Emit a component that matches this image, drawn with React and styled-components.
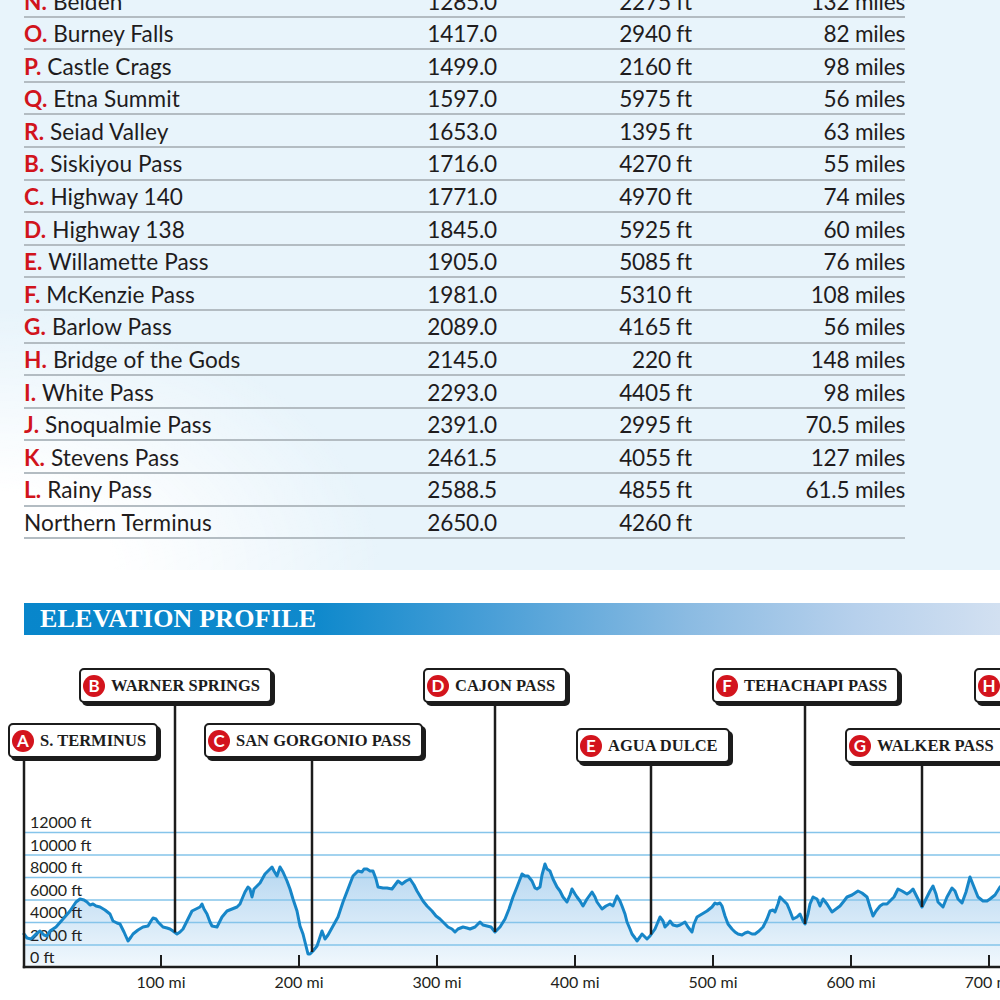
import React from "react";
import styled, { createGlobalStyle } from "styled-components";

const GlobalStyle = createGlobalStyle`
  html, body { margin: 0; padding: 0; background: #ffffff; overflow: hidden; }
  body { font-family: Lato, "Open Sans", sans-serif; color: #231f20; }
`;

const rows = [
  ["N", "Belden", "1285.0", "2275 ft", "132 miles"],
  ["O", "Burney Falls", "1417.0", "2940 ft", "82 miles"],
  ["P", "Castle Crags", "1499.0", "2160 ft", "98 miles"],
  ["Q", "Etna Summit", "1597.0", "5975 ft", "56 miles"],
  ["R", "Seiad Valley", "1653.0", "1395 ft", "63 miles"],
  ["B", "Siskiyou Pass", "1716.0", "4270 ft", "55 miles"],
  ["C", "Highway 140", "1771.0", "4970 ft", "74 miles"],
  ["D", "Highway 138", "1845.0", "5925 ft", "60 miles"],
  ["E", "Willamette Pass", "1905.0", "5085 ft", "76 miles"],
  ["F", "McKenzie Pass", "1981.0", "5310 ft", "108 miles"],
  ["G", "Barlow Pass", "2089.0", "4165 ft", "56 miles"],
  ["H", "Bridge of the Gods", "2145.0", "220 ft", "148 miles"],
  ["I", "White Pass", "2293.0", "4405 ft", "98 miles"],
  ["J", "Snoqualmie Pass", "2391.0", "2995 ft", "70.5 miles"],
  ["K", "Stevens Pass", "2461.5", "4055 ft", "127 miles"],
  ["L", "Rainy Pass", "2588.5", "4855 ft", "61.5 miles"],
  [null, "Northern Terminus", "2650.0", "4260 ft", ""],
];

const profile = [
  [24,935],[27,939],[31,940],[36,935],[40,932],[44,936],[47,937],[50,932],[56,928],[63,920],[70,912],[76,903],[80,900],[84,901],[87,903],[90,906],[93,905],[96,907],[100,908],[105,911],[110,915],[113,922],[117,924],[120,925],[124,933],[128,942],[131,938],[133,935],[138,931],[143,928],[148,927],[151,922],[153,919],[156,920],[158,923],[163,928],[167,929],[170,930],[173,932],[177,935],[180,933],[183,930],[188,920],[192,912],[196,910],[200,908],[202,905],[204,910],[207,915],[210,923],[212,927],[217,928],[220,922],[222,918],[227,912],[232,910],[237,908],[240,905],[242,900],[245,893],[248,888],[250,890],[252,898],[254,890],[257,887],[260,884],[265,875],[268,872],[272,868],[274,872],[277,877],[280,868],[283,873],[287,882],[290,890],[293,900],[297,912],[300,927],[303,935],[305,943],[308,955],[310,955],[313,952],[317,947],[320,938],[322,932],[325,940],[328,936],[333,927],[338,918],[343,903],[348,890],[353,877],[356,874],[358,872],[362,873],[364,870],[367,870],[370,872],[373,872],[376,880],[378,888],[383,889],[387,889],[392,890],[395,886],[398,882],[402,885],[406,882],[410,880],[414,886],[417,892],[420,897],[423,902],[427,907],[432,912],[436,917],[440,920],[444,924],[448,928],[452,930],[455,933],[458,930],[463,928],[467,929],[470,930],[475,928],[480,923],[483,926],[487,927],[491,928],[495,933],[500,928],[505,920],[509,910],[513,898],[517,888],[522,875],[525,877],[528,877],[532,882],[535,889],[537,890],[540,888],[542,876],[545,865],[547,870],[550,872],[553,880],[557,888],[560,892],[563,898],[567,903],[570,896],[572,890],[575,895],[577,898],[580,902],[583,907],[587,900],[592,893],[595,898],[597,903],[602,910],[606,907],[610,905],[613,907],[617,897],[620,902],[622,907],[625,915],[627,923],[630,930],[632,935],[635,939],[637,942],[640,938],[642,935],[645,938],[647,940],[650,937],[655,930],[660,918],[663,922],[665,928],[668,925],[670,922],[673,926],[677,927],[680,926],[685,923],[688,928],[692,933],[694,925],[697,918],[702,915],[707,912],[712,908],[715,904],[717,905],[720,904],[722,907],[725,917],[728,925],[732,930],[735,933],[738,935],[742,936],[745,934],[748,933],[752,935],[755,935],[759,932],[763,928],[767,920],[770,912],[773,911],[775,913],[778,905],[780,898],[784,902],[787,905],[790,912],[793,920],[797,918],[800,915],[803,922],[805,925],[808,915],[810,905],[813,898],[817,900],[820,907],[823,900],[827,905],[832,913],[836,910],[840,907],[844,902],[847,898],[852,896],[855,894],[858,892],[862,894],[867,898],[870,908],[873,917],[876,912],[880,907],[883,905],[887,905],[890,902],[894,898],[898,890],[902,892],[907,895],[910,893],[913,890],[917,898],[922,908],[925,902],[930,892],[933,887],[936,895],[938,903],[943,908],[947,898],[952,889],[955,892],[958,900],[962,904],[966,893],[970,878],[974,888],[978,898],[983,902],[987,902],[990,900],[995,896],[1000,888],[1006,882],
];

const TOP = 636;
const AXIS_Y = 968;
const gridLevels = [
  { label: "12000 ft", y: 833.5 },
  { label: "10000 ft", y: 856 },
  { label: "8000 ft", y: 878.5 },
  { label: "6000 ft", y: 901 },
  { label: "4000 ft", y: 923.5 },
  { label: "2000 ft", y: 946 },
  { label: "0 ft", y: 968 },
];

const callouts = [
  { letter: "A", name: "S. TERMINUS", x: 8, y: 724, lineX: 24 },
  { letter: "B", name: "WARNER SPRINGS", x: 79, y: 669, lineX: 175 },
  { letter: "C", name: "SAN GORGONIO PASS", x: 204, y: 724, lineX: 312 },
  { letter: "D", name: "CAJON PASS", x: 423, y: 669, lineX: 495 },
  { letter: "E", name: "AGUA DULCE", x: 576, y: 729, lineX: 651 },
  { letter: "F", name: "TEHACHAPI PASS", x: 712, y: 669, lineX: 805 },
  { letter: "G", name: "WALKER PASS", x: 845, y: 729, lineX: 922 },
  { letter: "H", name: "KENNEDY MEADOWS", x: 974, y: 669, lineX: null },
];

const curveYAt = (x) => {
  for (let i = 0; i < profile.length - 1; i++) {
    const [x1, y1] = profile[i];
    const [x2, y2] = profile[i + 1];
    if (x >= x1 && x <= x2) return y1 + ((x - x1) / (x2 - x1)) * (y2 - y1);
  }
  return AXIS_Y;
};

const Page = styled.div`
  width: 1000px;
  height: 1000px;
  overflow: hidden;
  display: flex;
  flex-direction: column;
`;

const Panel = styled.section`
  background:
    radial-gradient(ellipse 380px 260px at 0% 100%, #ffffff 0%, #ffffff 30%, rgba(255,255,255,0) 100%),
    #e8f4fb;
  padding: 0 95px 31px 24px;
  display: flex;
  flex-direction: column;
`;

const Table = styled.div`
  margin-top: -15px;
  display: flex;
  flex-direction: column;
`;

const Row = styled.div`
  display: grid;
  grid-template-columns: 333px 140px 195px 213px;
  align-items: center;
  height: 32.6px;
  box-sizing: border-box;
  padding-top: 3px;
  border-bottom: 2px solid #b3bcc2;
  font-size: 22.6px;
  line-height: 1;
  color: #1f1c1d;
`;

const Cell = styled.div`
  text-align: ${(p) => p.$align || "left"};
  white-space: nowrap;
  letter-spacing: ${(p) => (p.$align ? "-0.2px" : "0.1px")};
`;

const Mark = styled.span`
  color: #d1141c;
  font-weight: 700;
`;

const Heading = styled.h2`
  margin: 33px 0 0 24px;
  height: 32px;
  display: flex;
  align-items: center;
  padding-left: 16px;
  background: linear-gradient(90deg, #0886cb 0%, #0f89cc 30%, #4a9fd7 48%, #8bbbe2 68%, #b6d0ec 85%, #d2e0f1 100%);
  color: #ffffff;
  font-family: "Liberation Serif", serif;
  font-weight: 700;
  font-size: 26px;
  letter-spacing: 0.2px;
`;

const ChartArea = styled.div`
  position: relative;
  height: 364px;
  overflow: hidden;
`;

const ChartSvg = styled.svg`
  display: block;
`;

const Callout = styled.div`
  position: absolute;
  left: ${(p) => p.$x}px;
  top: ${(p) => p.$y}px;
  height: 35px;
  box-sizing: border-box;
  display: flex;
  align-items: center;
  gap: 6px;
  padding: 0 10px 0 2px;
  background: #ffffff;
  border: 2px solid #1c1c1c;
  border-radius: 5px;
  box-shadow: 3px 3px 0 #1c1c1c;
  white-space: nowrap;
`;

const Badge = styled.span`
  width: 22px;
  height: 22px;
  border-radius: 50%;
  background: #d3141d;
  color: #ffffff;
  display: flex;
  align-items: center;
  justify-content: center;
  font-family: Lato, sans-serif;
  font-weight: 700;
  font-size: 17px;
  line-height: 1;
`;

const CalloutText = styled.span`
  font-family: "Liberation Serif", serif;
  font-weight: 700;
  font-size: 16.5px;
  color: #1c1c1c;
  line-height: 1;
  padding-top: 1px;
`;

const AxisText = styled.text`
  font-family: Lato, sans-serif;
  font-size: 16px;
  fill: #231f20;
`;

function Chart() {
  const pts = profile.map(([x, y]) => `${x},${y}`).join(" L");
  const area = `M24,${AXIS_Y} L${pts} L1006,${AXIS_Y} Z`;
  const line = `M${pts}`;
  return (
    <ChartArea>
      <ChartSvg width="1000" height="364" viewBox={`0 ${TOP} 1000 364`}>
        <defs>
          <linearGradient id="fillGrad" gradientUnits="userSpaceOnUse" x1="0" y1="862" x2="0" y2="968">
            <stop offset="0" stopColor="#b3d5f0" />
            <stop offset="1" stopColor="#f1f8fd" />
          </linearGradient>
        </defs>
        <path d={area} fill="url(#fillGrad)" />
        {gridLevels.slice(0, 6).map((g) => (
          <line key={g.label} x1="24" x2="1000" y1={g.y} y2={g.y} stroke="#85c4ea" strokeWidth="1.6" />
        ))}
        {gridLevels.map((g) => (
          <AxisText key={"t" + g.label} x="30" y={g.y - 4.5}>{g.label}</AxisText>
        ))}
        <path d={line} fill="none" stroke="#1786c8" strokeWidth="3" strokeLinejoin="round" strokeLinecap="round" />
        {callouts.filter((c) => c.lineX && c.letter !== "A").map((c) => (
          <line key={c.letter} x1={c.lineX} x2={c.lineX} y1={c.y + 34} y2={curveYAt(c.lineX)} stroke="#1c1c1c" strokeWidth="2.5" />
        ))}
        <line x1="24" x2="24" y1="758" y2={AXIS_Y + 1.2} stroke="#1c1c1c" strokeWidth="2.5" />
        <line x1="22.8" x2="1000" y1={AXIS_Y} y2={AXIS_Y} stroke="#1c1c1c" strokeWidth="2.5" />
        {[1, 2, 3, 4, 5, 6, 7].map((i) => {
          const x = 23 + 138 * i;
          return (
            <g key={i}>
              <line x1={x} x2={x} y1="956" y2={AXIS_Y} stroke="#1c1c1c" strokeWidth="2" />
              <AxisText x={x} y="989" textAnchor="middle">{`${i * 100} mi`}</AxisText>
            </g>
          );
        })}
      </ChartSvg>
      {callouts.map((c) => (
        <Callout key={c.letter} $x={c.x} $y={c.y - TOP}>
          <Badge>{c.letter}</Badge>
          <CalloutText>{c.name}</CalloutText>
        </Callout>
      ))}
    </ChartArea>
  );
}

export default function App() {
  return (
    <Page>
      <GlobalStyle />
      <Panel>
        <Table>
          {rows.map(([letter, name, km, elev, dist]) => (
            <Row key={name}>
              <Cell>
                {letter && <Mark>{letter}.</Mark>}
                {letter ? " " : ""}
                {name}
              </Cell>
              <Cell $align="right">{km}</Cell>
              <Cell $align="right">{elev}</Cell>
              <Cell $align="right">{dist}</Cell>
            </Row>
          ))}
        </Table>
      </Panel>
      <Heading>ELEVATION PROFILE</Heading>
      <Chart />
    </Page>
  );
}
